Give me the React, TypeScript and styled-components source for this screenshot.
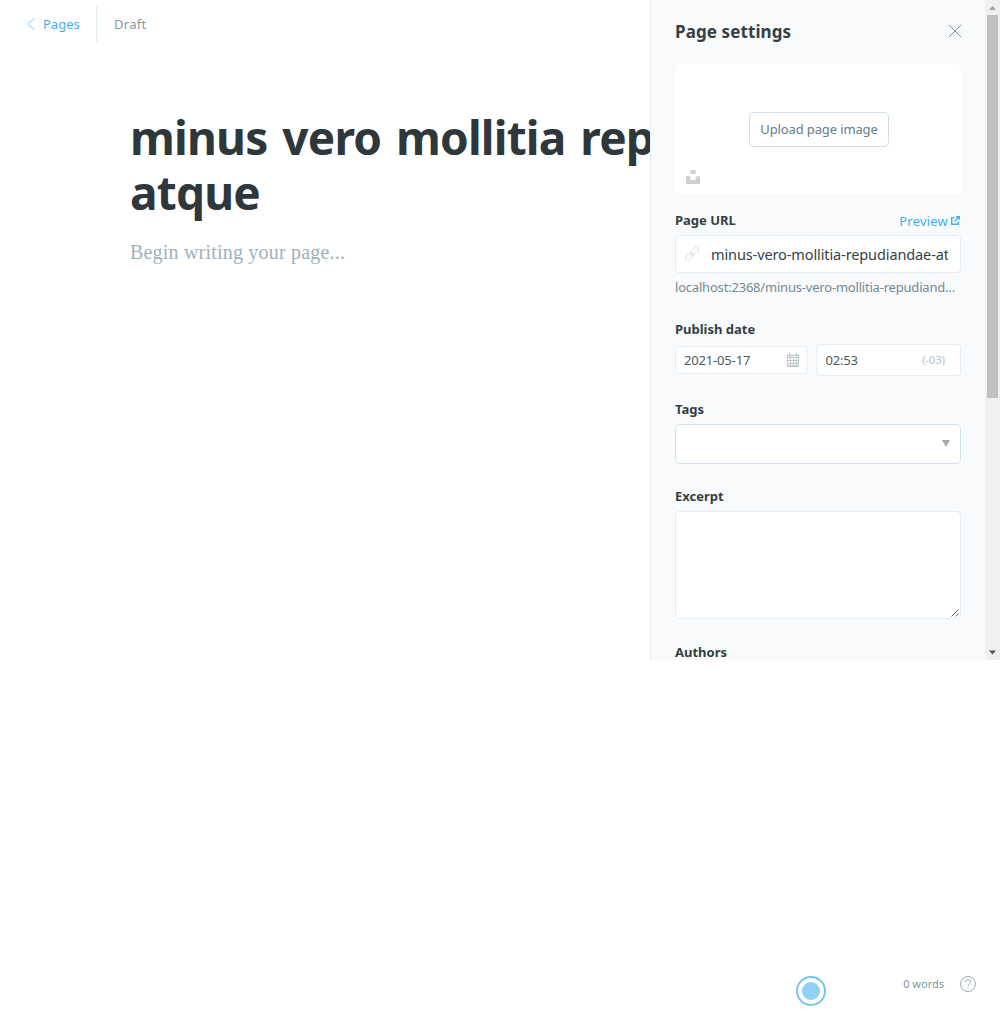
import React from 'react';
import styled, { createGlobalStyle } from 'styled-components';

const GlobalStyle = createGlobalStyle`
  *, *::before, *::after { box-sizing: border-box; }
  body {
    margin: 0;
    background: #fff;
    color: #343f44;
    font-family: "Noto Sans", "Open Sans", sans-serif;
    font-size: 13px;
  }
`;

const Page = styled.div`
  position: relative;
  display: flex;
  flex-direction: column;
  height: 1016px;
  overflow: hidden;
`;

const TopBar = styled.header`
  display: flex;
  align-items: center;
  height: 48px;
  padding-left: 27px;
`;

const BackLink = styled.a`
  display: flex;
  align-items: center;
  gap: 8px;
  width: 70px;
  height: 36px;
  border-right: 1px solid #dfebf3;
  color: #3eb0ef;
  line-height: 20px;
`;

const Status = styled.span`
  padding-left: 17px;
  color: #8699a2;
  line-height: 20px;
  letter-spacing: 0.3px;
`;

const Editor = styled.main`
  flex: 1;
  width: 740px;
  margin: 62px 0 0 130px;
`;

const Title = styled.h1`
  margin: 0;
  color: #2d373c;
  font-size: 46px;
  font-weight: 700;
  line-height: 55px;
  letter-spacing: -0.8px;
  word-spacing: 3.6px;
`;

const Placeholder = styled.p`
  margin: 17px 0 0;
  color: #9fb1ba;
  font-family: "Liberation Serif", serif;
  font-size: 20px;
  line-height: 30px;
  letter-spacing: 0.2px;
`;

const Footer = styled.footer`
  display: flex;
  align-items: flex-start;
  justify-content: flex-end;
  height: 40px;
  padding-right: 24px;
`;

const Beacon = styled.span`
  display: grid;
  place-items: center;
  width: 30px;
  height: 30px;
  margin-right: 77px;
  border: 2px solid #73c4f1;
  border-radius: 50%;
  &::before {
    content: "";
    width: 18px;
    height: 18px;
    border-radius: 50%;
    background: #90d0f5;
  }
`;

const WordCount = styled.span`
  color: #8094a0;
  font-size: 11px;
  line-height: 16px;
  margin-right: 16px;
`;

const Panel = styled.aside`
  position: absolute;
  top: 0;
  right: 0;
  display: flex;
  width: 350px;
  height: 660px;
  overflow: hidden;
  border-left: 1px solid #e3eef6;
  background: #f9fafc;
`;

const PanelBody = styled.div`
  flex: 1;
  min-width: 0;
  padding: 0 24px;
`;

const PanelHeader = styled.div`
  display: flex;
  align-items: center;
  justify-content: space-between;
  height: 64px;
`;

const PanelTitle = styled.h2`
  margin: 0;
  font-size: 17px;
  line-height: 24px;
  font-weight: 700;
  letter-spacing: 0.1px;
`;

const CloseIcon = styled.svg`
  width: 14px;
  height: 14px;
  margin-right: -1px;
  margin-top: -2px;
`;

const ImageBox = styled.div`
  display: grid;
  grid-template-rows: 48px 35px 1fr;
  height: 130px;
  padding-left: 2px;
  border-radius: 4px;
  background: #fff;
  justify-items: center;
  & > button { grid-row: 2; }
  & > svg { grid-row: 3; justify-self: start; align-self: end; margin: 0 0 10px 9px; }
`;

const UploadButton = styled.button`
  width: 140px;
  height: 35px;
  padding: 0 0 2px;
  border: 1px solid #d0dfe7;
  border-radius: 5px;
  background: #fff;
  color: #667c87;
  font: 13px "Noto Sans", sans-serif;
  letter-spacing: -0.13px;
`;

const Field = styled.section<{ $gap: number }>`
  padding-top: ${p => p.$gap}px;
`;

const LabelRow = styled.div`
  display: flex;
  align-items: center;
  justify-content: space-between;
  height: 20px;
  margin-bottom: 5px;
`;

const Label = styled.label`
  color: #343f44;
  font-weight: 700;
  line-height: 20px;
`;

const PreviewLink = styled.a`
  display: flex;
  align-items: center;
  gap: 3px;
  margin-top: 1px;
  padding-right: 1px;
  color: #3eb0ef;
  line-height: 20px;
  letter-spacing: 0.2px;
`;

const InputBox = styled.div<{ $h: number; $pad?: string; $w?: number; $strong?: boolean }>`
  display: flex;
  align-items: center;
  justify-content: space-between;
  width: ${p => (p.$w ? `${p.$w}px` : '100%')};
  height: ${p => p.$h}px;
  padding: ${p => p.$pad || '0'};
  border: 1px solid ${p => (p.$strong ? '#d3e2ea' : '#e3eef6')};
  border-radius: 4px;
  background: #fff;
  color: #4b5b62;
`;

const Slug = styled.span`
  flex: 1;
  margin-left: 12px;
  overflow: hidden;
  white-space: nowrap;
  color: #343f44;
  font-size: 14.5px;
  line-height: 22px;
  letter-spacing: -0.11px;
`;

const Hint = styled.p`
  margin: 4px 0 0;
  color: #738a94;
  line-height: 20px;
  letter-spacing: -0.2px;
  white-space: nowrap;
`;

const DateRow = styled.div`
  display: flex;
  align-items: center;
  justify-content: space-between;
`;

const DateText = styled.span`
  line-height: 20px;
  letter-spacing: -0.17px;
`;

const Zone = styled.small`
  margin-top: -1px;
  color: #b7c2c8;
  font-size: 11px;
`;

const TextArea = styled.div`
  display: flex;
  align-items: flex-end;
  justify-content: flex-end;
  height: 108px;
  border: 1px solid #e3eef6;
  border-radius: 4px;
  background: #fff;
`;

const Scrollbar = styled.div`
  display: flex;
  flex-direction: column;
  align-items: center;
  width: 15px;
  padding: 6px 0 5px;
  background: #f0f0f0;
`;

const Thumb = styled.div`
  width: 11px;
  height: 383px;
  margin: 5px 0 auto;
  background: #c0c0c0;
`;

export default function App() {
  return (
    <Page>
      <GlobalStyle />
      <TopBar>
        <BackLink>
          <svg width="8" height="12" viewBox="0 0 8 12" fill="none" stroke="#7ac8f3" strokeWidth="1">
            <path d="M7.5 0.3L0.7 6l6.8 5.7" />
          </svg>
          Pages
        </BackLink>
        <Status>Draft</Status>
      </TopBar>
      <Editor>
        <Title>minus vero mollitia repudiandae atque</Title>
        <Placeholder>Begin writing your page...</Placeholder>
      </Editor>
      <Footer>
        <Beacon />
        <WordCount>0 words</WordCount>
        <svg width="16" height="16" viewBox="0 0 16 16" fill="none" stroke="#8fa3ad" strokeWidth="0.9">
          <circle cx="8" cy="8" r="7.5" />
          <path d="M5.4 6.2c0-3.6 5.2-3.4 5.2-.4 0 1.9-2.5 1.9-2.5 4.2" />
          <path d="M8.1 11.4v1.2" />
        </svg>
      </Footer>
      <Panel>
        <PanelBody>
          <PanelHeader>
            <PanelTitle>Page settings</PanelTitle>
            <CloseIcon viewBox="0 0 14 14" stroke="#6d787e" strokeWidth="0.85">
              <path d="M1 1l12 12M13 1L1 13" />
            </CloseIcon>
          </PanelHeader>
          <ImageBox>
            <UploadButton>Upload page image</UploadButton>
            <svg width="14" height="14" viewBox="0 0 32 32" fill="#d0d0d0">
              <path d="M10 9V0h12v9H10zm12 5h10v18H0V14h10v9h12v-9z" />
            </svg>
          </ImageBox>
          <Field $gap={16}>
            <LabelRow>
              <Label>Page URL</Label>
              <PreviewLink>
                Preview
                <svg width="9" height="9" viewBox="0 0 9 9" fill="none" stroke="#3eb0ef" strokeWidth="1.4">
                  <path d="M3.6 1.6H.7v6.7h6.7V5.6" />
                  <path d="M3.5 5.4L7.4 1.5M5.2.7h3.1v3.1" />
                </svg>
              </PreviewLink>
            </LabelRow>
            <InputBox $h={38} $pad="0 12px 0 9px">
              <svg width="14" height="14" viewBox="0 0 14 14" fill="none" stroke="#d3dfe5" strokeWidth="0.8">
                <g transform="rotate(-45 7 7)">
                  <rect x="-1.3" y="4.5" width="8.2" height="5" rx="2.3" />
                  <rect x="7.1" y="4.5" width="8.2" height="5" rx="2.3" />
                  <path d="M3.6 7h6.8" />
                </g>
              </svg>
              <Slug>minus-vero-mollitia-repudiandae-atque</Slug>
            </InputBox>
            <Hint>localhost:2368/minus-vero-mollitia-repudiand…</Hint>
          </Field>
          <Field $gap={22}>
            <LabelRow><Label>Publish date</Label></LabelRow>
            <DateRow>
              <InputBox $h={28} $w={133} $pad="0 8px">
                <DateText>2021-05-17</DateText>
                <svg width="12" height="14" viewBox="0 0 12 14" fill="none" stroke="#b3bec4" strokeWidth="0.8">
                  <path d="M.5 2h11v11.5H.5zM.5 4.5h11M2.5 0v3M9.5 0v3M.5 7.5h11M.5 10.5h11M3.5 4.5v9M6.5 4.5v9M9.5 4.5v9" />
                  <path d="M.5 2.8h11M.5 12.8h11" />
                </svg>
              </InputBox>
              <InputBox $h={32} $w={145} $pad="0 15px 0 8.5px">
                <DateText>02:53</DateText>
                <Zone>(-03)</Zone>
              </InputBox>
            </DateRow>
          </Field>
          <Field $gap={23}>
            <LabelRow><Label>Tags</Label></LabelRow>
            <InputBox $h={40} $strong $pad="0 10px 2px">
              <span />
              <svg width="8" height="7" viewBox="0 0 8 7" fill="#a9a9a9"><path d="M0 0h8L4 7z" /></svg>
            </InputBox>
          </Field>
          <Field $gap={22}>
            <LabelRow><Label>Excerpt</Label></LabelRow>
            <TextArea>
              <svg width="9" height="9" viewBox="0 0 9 9" stroke="#555" strokeWidth="0.9">
                <path d="M.5 7.5l7-7M4.5 7.5l3-3" />
              </svg>
            </TextArea>
          </Field>
          <Field $gap={23}>
            <LabelRow><Label>Authors</Label></LabelRow>
          </Field>
        </PanelBody>
        <Scrollbar>
          <svg width="7" height="4" viewBox="0 0 7 4" fill="#a3a3a3"><path d="M0 4L3.5 0 7 4z" /></svg>
          <Thumb />
          <svg width="7" height="5" viewBox="0 0 7 5" fill="#505050"><path d="M0 .5h7L3.5 4.5z" /></svg>
        </Scrollbar>
      </Panel>
    </Page>
  );
}
